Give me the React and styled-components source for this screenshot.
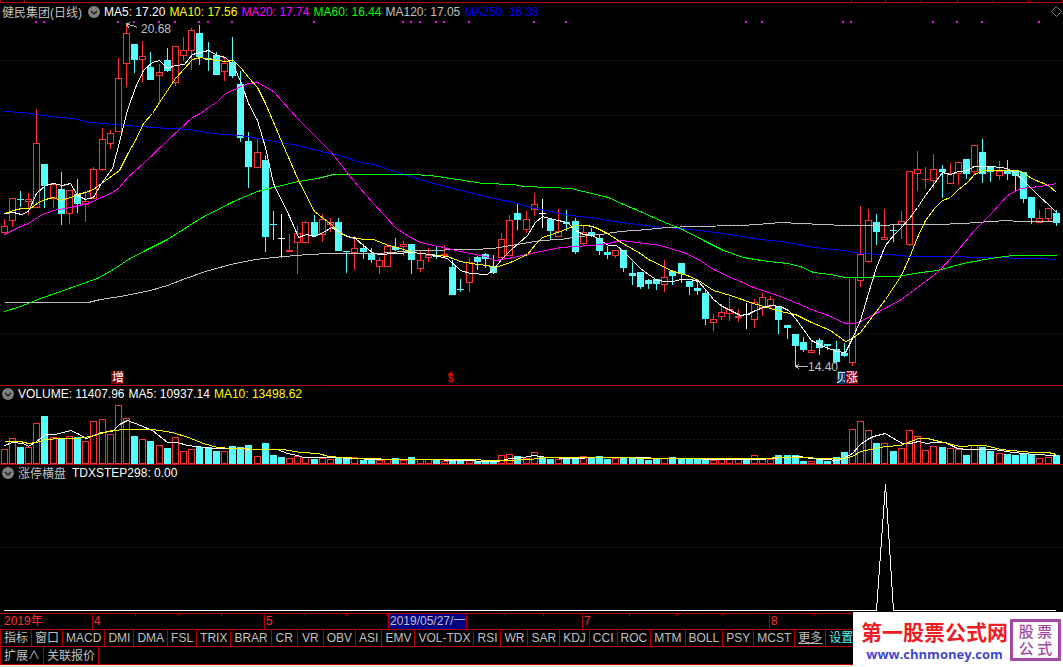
import React from "react";
import styled, { createGlobalStyle } from "styled-components";

const RED = "#ff3232";
const CYAN = "#54fcfc";
const LINE = "#b00000";

// kind, high, body top, body bottom, low, top of the volume bar
const candles = [
  ["r", 219, 226, 233, 233, 449],
  ["r", 198, 198, 221, 227, 438],
  ["c", 191, 199, 200, 207, 447],
  ["r", 193, 199, 202, 215, 447],
  ["r", 109, 143, 208, 208, 423],
  ["c", 164, 164, 186, 208, 416],
  ["r", 183, 184, 199, 208, 437],
  ["c", 172, 189, 214, 225, 438],
  ["r", 190, 190, 214, 224, 436],
  ["c", 179, 194, 204, 213, 437],
  ["r", 191, 201, 205, 222, 441],
  ["r", 167, 169, 199, 199, 421],
  ["r", 128, 139, 170, 171, 419],
  ["r", 130, 133, 144, 149, 434],
  ["r", 58, 78, 132, 132, 405],
  ["r", 25, 33, 64, 87, 418],
  ["c", 44, 44, 60, 73, 436],
  ["r", 41, 56, 60, 82, 439],
  ["c", 52, 67, 80, 80, 441],
  ["r", 64, 72, 76, 104, 445],
  ["c", 48, 60, 71, 72, 448],
  ["r", 46, 46, 83, 86, 437],
  ["r", 37, 50, 56, 61, 451],
  ["r", 28, 30, 51, 70, 449],
  ["c", 25, 33, 57, 65, 447],
  ["c", 42, 58, 60, 71, 447],
  ["c", 52, 55, 75, 75, 451],
  ["r", 58, 63, 72, 81, 451],
  ["c", 37, 62, 76, 78, 446],
  ["c", 71, 84, 138, 142, 447],
  ["c", 132, 141, 167, 188, 445],
  ["r", 139, 152, 168, 168, 456],
  ["c", 155, 160, 237, 252, 443],
  ["c", 211, 224, 225, 240, 455],
  ["w", 214, 238, 239, 258, 457],
  ["r", 234, 250, 252, 252, 458],
  ["r", 226, 233, 243, 274, 456],
  ["r", 221, 222, 243, 243, 457],
  ["c", 215, 222, 236, 236, 459],
  ["r", 214, 219, 235, 242, 458],
  ["r", 218, 222, 225, 232, 459],
  ["c", 218, 222, 251, 251, 458],
  ["c", 251, 251, 252, 273, 458],
  ["r", 236, 248, 253, 270, 457],
  ["c", 244, 248, 252, 259, 460],
  ["c", 248, 254, 260, 263, 459],
  ["r", 257, 260, 267, 274, 460],
  ["r", 245, 246, 267, 267, 459],
  ["c", 238, 247, 250, 251, 458],
  ["r", 241, 244, 247, 256, 460],
  ["c", 244, 244, 260, 274, 457],
  ["r", 251, 260, 269, 272, 459],
  ["r", 248, 255, 258, 262, 459],
  ["c", 246, 255, 257, 259, 460],
  ["r", 245, 254, 256, 256, 461],
  ["c", 260, 267, 295, 295, 460],
  ["c", 279, 289, 290, 292, 460],
  ["r", 258, 262, 283, 292, 460],
  ["c", 256, 257, 262, 270, 461],
  ["c", 253, 254, 259, 268, 460],
  ["c", 255, 266, 273, 274, 461],
  ["r", 233, 239, 258, 258, 455],
  ["r", 215, 220, 256, 256, 454],
  ["c", 203, 213, 220, 230, 456],
  ["r", 211, 219, 230, 233, 458],
  ["r", 193, 204, 210, 216, 452],
  ["w", 199, 213, 214, 228, 457],
  ["c", 219, 219, 231, 239, 459],
  ["r", 209, 231, 237, 237, 459],
  ["c", 210, 222, 224, 231, 458],
  ["c", 218, 221, 252, 254, 458],
  ["r", 225, 232, 244, 245, 456],
  ["c", 228, 232, 236, 237, 458],
  ["c", 234, 238, 251, 255, 456],
  ["c", 246, 252, 255, 259, 459],
  ["r", 250, 250, 256, 258, 458],
  ["c", 250, 250, 268, 272, 458],
  ["c", 262, 273, 276, 285, 458],
  ["c", 272, 272, 287, 289, 458],
  ["c", 279, 280, 284, 289, 460],
  ["c", 279, 279, 284, 290, 458],
  ["r", 260, 277, 285, 292, 458],
  ["c", 271, 271, 276, 285, 457],
  ["c", 263, 263, 274, 283, 459],
  ["c", 281, 281, 287, 295, 459],
  ["c", 281, 288, 291, 295, 459],
  ["c", 289, 293, 319, 325, 459],
  ["r", 314, 319, 323, 331, 460],
  ["r", 304, 312, 317, 320, 459],
  ["r", 297, 309, 314, 321, 459],
  ["r", 309, 316, 318, 322, 459],
  ["w", 303, 314, 315, 329, 460],
  ["r", 299, 302, 320, 328, 455],
  ["r", 293, 297, 308, 316, 458],
  ["r", 296, 299, 306, 308, 459],
  ["c", 306, 306, 320, 334, 455],
  ["c", 325, 325, 328, 339, 455],
  ["c", 334, 334, 346, 366, 455],
  ["c", 337, 342, 350, 352, 461],
  ["r", 341, 350, 353, 353, 461],
  ["c", 338, 340, 348, 355, 459],
  ["c", 344, 344, 346, 350, 461],
  ["c", 341, 349, 362, 364, 457],
  ["c", 343, 353, 356, 357, 452],
  ["r", 277, 277, 363, 366, 429],
  ["r", 206, 254, 281, 287, 421],
  ["r", 209, 220, 262, 263, 430],
  ["c", 214, 222, 232, 245, 443],
  ["r", 209, 237, 240, 240, 443],
  ["c", 225, 230, 231, 242, 451],
  ["r", 211, 221, 225, 239, 448],
  ["r", 171, 171, 245, 246, 430],
  ["r", 151, 169, 174, 191, 436],
  ["r", 167, 179, 180, 189, 450],
  ["r", 154, 169, 181, 189, 446],
  ["c", 165, 169, 172, 198, 447],
  ["r", 163, 173, 184, 184, 448],
  ["r", 162, 162, 174, 185, 449],
  ["c", 159, 159, 174, 179, 455],
  ["r", 145, 145, 172, 174, 445],
  ["c", 139, 152, 174, 183, 447],
  ["c", 167, 167, 172, 182, 451],
  ["r", 161, 171, 176, 180, 453],
  ["c", 160, 171, 174, 180, 454],
  ["c", 171, 171, 176, 191, 455],
  ["c", 172, 172, 199, 203, 453],
  ["c", 197, 197, 218, 224, 454],
  ["r", 210, 218, 223, 223, 458],
  ["r", 208, 208, 219, 221, 457],
  ["c", 210, 213, 223, 226, 455],
];

const priceLines = [
  {
    color: "#0000ff",
    points:
      "4,111 23,112 50,116 73,118 90,122 127,125 153,127 187,129 213,133 240,135 263,139 297,145 330,153 343,156 357,161 377,165 397,172 430,182 457,189 480,195 513,202 530,207 550,211 570,215 597,218 620,222 653,226 680,228 707,231 737,235 753,238 787,242 813,247 843,250 860,253 887,254 910,256 950,256 980,257 1037,258 1056,259",
  },
  {
    color: "#c0c0c0",
    points:
      "4,302 88,302 100,299 120,296 150,290 167,285 185,278 205,271 230,264 255,259 273,257 307,254 330,253 377,253 417,250 473,249 493,248 517,244 540,240 560,239 580,236 600,234 620,231 647,229 667,227 693,226 740,225 757,224 780,222 800,223 823,224 843,225 937,224 963,223 990,221 1007,220 1017,221 1056,221",
  },
  {
    color: "#00ff00",
    points:
      "4,311 20,306 40,298 60,291 80,284 97,278 113,269 128,259 145,250 167,239 200,218 233,201 257,191 273,187 298,181 317,178 333,174 410,174 430,175 457,179 483,183 513,184 523,186 550,187 570,188 583,191 608,197 623,204 640,211 653,217 667,223 680,228 707,242 723,250 743,257 767,261 787,263 800,266 813,272 830,274 845,277 870,277 877,276 897,276 920,272 937,270 963,263 990,258 1012,255 1056,255",
  },
  {
    color: "#ff00ff",
    points:
      "4,234 20,226 28,223 40,215 53,210 70,207 90,202 101,197 112,192 119,187 127,177 143,163 167,140 192,117 200,113 208,107 217,101 225,93 241,86 248,83 257,82 273,91 298,119 330,151 353,180 372,202 396,228 410,237 420,242 447,248 460,251 485,256 495,260 513,257 535,252 560,247 590,245 608,243 620,240 637,242 660,245 683,252 698,259 713,269 730,277 740,281 753,287 780,296 790,300 811,309 830,316 845,323 853,323 860,321 877,312 901,299 917,287 937,272 953,255 974,230 992,212 1007,195 1020,188 1040,186 1056,183",
  },
  {
    color: "#ffff00",
    points:
      "4,213 13,210 21,208 30,208 38,202 45,199 53,197 60,200 70,197 77,194 85,192 93,189 101,183 112,175 119,170 127,154 135,140 143,123 152,113 159,102 167,90 175,78 184,68 192,59 200,57 210,59 225,61 233,60 241,68 248,77 257,87 265,103 282,143 298,180 314,211 323,218 331,224 338,232 347,236 363,239 373,239 388,245 397,247 412,252 430,254 447,256 460,261 477,264 487,265 495,267 510,262 527,254 535,244 542,237 560,231 575,225 587,225 595,227 607,233 624,244 640,253 648,259 673,271 687,275 698,280 713,290 730,295 753,303 780,311 795,314 811,322 830,330 845,341 852,338 860,332 885,299 901,275 909,257 917,237 925,220 934,208 942,200 950,197 958,189 967,182 974,174 983,170 1017,170 1023,172 1031,178 1048,185 1056,192",
  },
  {
    color: "#ffffff",
    points:
      "4,213 13,212 21,214 28,211 36,193 45,185 53,183 62,185 70,183 77,195 85,199 93,197 101,183 112,168 119,142 127,110 135,87 143,70 152,62 159,60 167,68 175,65 184,64 192,54 200,52 208,50 217,55 225,57 233,65 241,83 248,103 257,120 265,147 273,183 290,218 298,237 306,234 314,236 323,232 331,227 338,231 347,236 355,238 363,245 372,252 378,254 412,252 430,254 438,256 447,258 460,270 470,273 487,274 493,269 502,258 510,250 527,235 535,222 542,216 553,219 567,222 575,230 583,234 592,235 599,239 608,245 616,245 624,252 633,261 640,268 648,274 657,280 665,281 673,281 680,279 690,279 698,281 706,290 713,299 722,306 730,310 740,315 747,314 755,310 763,307 771,305 780,306 788,310 795,318 803,329 811,340 823,346 836,351 845,352 852,338 860,320 868,293 876,267 885,245 893,235 901,227 909,218 917,207 925,195 934,183 942,172 950,174 958,171 967,170 974,166 992,166 999,167 1007,168 1015,173 1023,180 1031,188 1040,197 1048,204 1056,212",
  },
];

const volumeLines = [
  {
    color: "#ffffff",
    points:
      "4,445 12,442 23,443 28,446 36,441 45,434 55,434 70,430 77,433 86,438 101,432 112,431 119,424 127,420 140,425 152,430 167,442 177,442 187,445 213,448 277,449 287,453 297,455 303,457 335,457 350,458 377,459 433,459 453,460 497,461 510,458 523,457 533,455 547,457 570,458 600,457 640,457 660,458 680,458 720,459 760,459 783,457 800,456 810,458 825,459 837,460 843,458 852,453 860,444 867,439 873,436 885,433 893,438 902,443 910,443 918,441 927,443 933,442 945,442 957,448 967,449 993,449 1013,452 1033,454 1056,455",
  },
  {
    color: "#ffff00",
    points:
      "4,441 20,441 28,443 36,442 45,439 60,438 75,438 90,436 100,433 112,430 125,429 152,429 172,432 188,437 203,443 217,447 232,448 265,449 283,449 300,452 318,453 328,456 343,457 360,458 400,459 470,459 490,460 505,460 530,459 545,457 590,457 680,458 740,458 805,457 820,458 843,458 852,456 860,451 870,449 885,446 900,445 918,438 927,438 943,442 960,446 975,445 985,445 1000,449 1033,452 1048,452 1056,454",
  },
];

const signals = [
  36, 44, 118, 134, 159, 175, 199, 208, 232, 314, 403, 411, 420, 436, 444, 469,
  534, 566, 746, 762, 843, 851, 933, 957, 982, 1039,
];

const averages = [
  ["MA5: 17.20", "#ffffff"],
  ["MA10: 17.56", "#ffff00"],
  ["MA20: 17.74", "#ff00ff"],
  ["MA60: 16.44", "#00ff00"],
  ["MA120: 17.05", "#c0c0c0"],
  ["MA250: 16.36", "#0000ff"],
];

const months = [
  ["2019年", 92],
  ["4", 172],
  ["5", 124],
  ["", 194],
  ["7", 187],
  ["8", 294],
];

const weekTicks = [135, 178, 221, 305, 346, 386, 505, 543, 629, 676, 722, 814];

const indicators =
  "指标 窗口 MACD DMI DMA FSL TRIX BRAR CR VR OBV ASI EMV VOL-TDX RSI WR SAR KDJ CCI ROC MTM BOLL PSY MCST 更多 设置".split(
    " "
  );

const candleX = (i) => Math.floor(4.2 + i * 8.155);

const Grid = ({ levels }) =>
  levels.map((y) => (
    <line
      key={y}
      x1="1"
      x2="1063"
      y1={y + 0.5}
      y2={y + 0.5}
      stroke="#a00000"
      strokeDasharray="1 3"
    />
  ));

const Lines = ({ items }) => (
  <g transform="translate(0.5 0.5)" fill="none">
    {items.map((item) => (
      <polyline key={item.color} points={item.points} stroke={item.color} />
    ))}
  </g>
);

const Candle = ({ index, data }) => {
  const [kind, high, top, bottom, low] = data;
  const x = candleX(index);
  const color = { r: RED, c: CYAN, w: "#ffffff" }[kind];
  const hollow = kind === "r" && bottom - top > 2;
  return (
    <g fill={color}>
      <rect x={x} y={high} width="1" height={top - high} />
      <rect x={x} y={bottom} width="1" height={low - bottom} />
      {hollow ? (
        <rect
          x={x - 2.5}
          y={top + 0.5}
          width="6"
          height={bottom - top - 1}
          fill="none"
          stroke={color}
        />
      ) : (
        <rect x={x - 3} y={top} width="7" height={bottom - top} />
      )}
    </g>
  );
};

const VolumeBar = ({ index, data }) => {
  const x = candleX(index);
  const top = data[5];
  return data[0] === "r" ? (
    <rect
      x={x - 2.5}
      y={top + 0.5}
      width="6"
      height={463 - top}
      fill="none"
      stroke={RED}
    />
  ) : (
    <rect x={x - 3} y={top} width="7" height={464 - top} fill={CYAN} />
  );
};

const Toggle = ({ label }) => (
  <ToggleButton aria-label={label}>
    <svg width="12" height="12" viewBox="0 0 12 12">
      <circle cx="6" cy="6" r="6" fill="#808080" />
      <path d="M3 5l3 3 3-3" fill="none" stroke="#202020" strokeWidth="1.5" />
    </svg>
  </ToggleButton>
);

const App = () => {
  return (
    <>
      <GlobalStyle />
      <Screen>
        <TopEdge>
          <EdgeCell $size={23} />
          <EdgeCell $size={832} />
          <EdgeCell $size={34} />
          <EdgeCell $size={35} />
          <EdgeCell $size={35} />
          <EdgeCell $size={35} />
          <EdgeCell $size={35} />
          <EdgeCell $size={33} />
        </TopEdge>

        <Panel>
          <PanelHeader>
            <Name>健民集团(日线)</Name>
            <Toggle label="主图" />
            {averages.map(([text, color]) => (
              <Value key={text} $color={color}>
                {text}
              </Value>
            ))}
            <Corner width="11" height="11" viewBox="0 0 11 11">
              <path d="M5.5 0.5l5 5-5 5-5-5z" fill="none" stroke="#808080" />
            </Corner>
          </PanelHeader>
          <Chart $height={365} viewBox="0 20 1063 365">
            <Grid levels={[60, 115, 169, 224, 279, 333]} />
            {signals.map((x) => (
              <rect key={x} x={x - 1} y="21" width="2" height="2" fill="#ff00ff" />
            ))}
            {candles.map((data, i) => (
              <Candle key={i} index={i} data={data} />
            ))}
            <Lines items={priceLines} />
            <g fill="none" stroke="#c0c0c0">
              <path d="M126.5 24.5l6 1 5 2M130.5 22.5l-4 1.5 2.5 4" />
              <path d="M795.5 366.5h12M799.5 363.5l-3.5 3 3.5 3" />
            </g>
            <ChartText x="141" y="33">
              20.68
            </ChartText>
            <ChartText x="808" y="371">
              14.40
            </ChartText>
            <rect x="111" y="371" width="13" height="13" fill="#800000" />
            <ChartText x="112" y="382" $color="#ffffff">
              增
            </ChartText>
            <rect x="837" y="371" width="9" height="13" fill="#003468" />
            <ChartText x="836" y="382" $color="#ffffff">
              贝
            </ChartText>
            <path d="M845 371h10l3 3v10h-13z" fill="#800000" />
            <ChartText x="846" y="382" $color="#ffffff">
              涨
            </ChartText>
            <path d="M448 375l2.500-3 2.500 3z" fill="#ff0000" />
            <ChartText x="448" y="382" $color="#ff0000" $small>
              $
            </ChartText>
          </Chart>
        </Panel>

        <Panel>
          <PanelHeader $raised>
            <Toggle label="成交量" />
            <Value $color="#ffffff">VOLUME: 11407.96</Value>
            <Value $color="#ffffff">MA5: 10937.14</Value>
            <Value $color="#ffff00">MA10: 13498.62</Value>
          </PanelHeader>
          <Chart $height={61} viewBox="0 403 1063 61">
            <Grid levels={[416, 439]} />
            {candles.map((data, i) => (
              <VolumeBar key={i} index={i} data={data} />
            ))}
            <Lines items={volumeLines} />
          </Chart>
        </Panel>

        <Panel>
          <PanelHeader $raised>
            <Toggle label="副图" />
            <Name>涨停横盘</Name>
            <Value $color="#ffffff">TDXSTEP298: 0.00</Value>
          </PanelHeader>
          <Chart $height={131} viewBox="0 482 1063 131">
            <Grid levels={[547]} />
            <path
              d="M4 610.500H876.500L885.500 484L893.500 610.500H1056"
              fill="none"
              stroke="#ffffff"
            />
          </Chart>
        </Panel>

        <Axis>
          <Ticks viewBox="0 0 1063 15">
            {weekTicks.map((x) => (
              <rect key={x} x={x} y="0" width="1" height="2" fill={LINE} />
            ))}
          </Ticks>
          {months.map(([text, size]) => (
            <Month key={size} $size={size}>
              {text}
            </Month>
          ))}
          <Cursor>2019/05/27/一</Cursor>
        </Axis>

        <Bar>
          {indicators.map((text) => (
            <Tab key={text} $active={text === "设置"} $underline={text === "更多"}>
              {text}
            </Tab>
          ))}
        </Bar>
        <Bar>
          <Tab>扩展∧</Tab>
          <Tab>关联报价</Tab>
        </Bar>
        <BottomEdge />

        <Watermark>
          <SiteText>
            <SiteName>第一股票公式网</SiteName>
            <SiteLink href="#">www.chnmoney.com</SiteLink>
          </SiteText>
          <Stamp>股 票 公 式</Stamp>
        </Watermark>
      </Screen>
    </>
  );
};

const GlobalStyle = createGlobalStyle`
  * {
    box-sizing: border-box;
  }
  body {
    margin: 0;
    background: #000;
    overflow: hidden;
  }
`;

const Screen = styled.div`
  position: relative;
  display: flex;
  flex-direction: column;
  background: #000;
  color: #c0c0c0;
  font: 12px "Liberation Sans", "Noto Sans CJK SC", sans-serif;
  white-space: nowrap;
`;

const TopEdge = styled.div`
  display: flex;
  height: 2px;
  border-left: 1px solid ${LINE};
`;

const EdgeCell = styled.div`
  flex: ${(props) => props.$size} 0 0;
  border-right: 1px solid ${LINE};
`;

const Panel = styled.section`
  border-top: 1px solid ${LINE};
`;

const PanelHeader = styled.header`
  display: flex;
  align-items: center;
  gap: 4px;
  height: 17px;
  padding: 0 1px ${(props) => (props.$raised ? 2 : 0)}px 2px;
`;

const Name = styled.span`
  padding-right: 2px;
  color: #c0c0c0;
`;

const Value = styled.span`
  color: ${(props) => props.$color};
`;

const ToggleButton = styled.button`
  display: flex;
  padding: 0;
  border: 0;
  background: none;
`;

const Corner = styled.svg`
  margin-left: auto;
`;

const Chart = styled.svg.attrs({ preserveAspectRatio: "none" })`
  display: block;
  width: 100%;
  height: ${(props) => props.$height}px;
  shape-rendering: crispEdges;
`;

const ChartText = styled.text`
  fill: ${(props) => props.$color || "#c0c0c0"};
  font-size: ${(props) => (props.$small ? 10 : 12)}px;
  font-weight: ${(props) => (props.$small ? "bold" : "normal")};
`;

const Axis = styled.div`
  position: relative;
  display: flex;
  height: 16px;
  border-top: 1px solid ${LINE};
`;

const Ticks = styled.svg.attrs({ preserveAspectRatio: "none" })`
  position: absolute;
  width: 100%;
  height: 15px;
`;

const Month = styled.div`
  flex: none;
  width: calc(100% * ${(props) => props.$size} / 1063);
  padding-left: 1px;
  line-height: 15px;
  color: ${RED};

  & + & {
    border-left: 1px solid ${LINE};
  }

  &:first-of-type {
    padding-left: 4px;
  }

  &:nth-of-type(4) {
    border-left: 0;
  }
`;

const Cursor = styled.div`
  position: absolute;
  left: 36.5%;
  width: 79px;
  height: 15px;
  padding-left: 1px;
  overflow: hidden;
  border: solid ${LINE};
  border-width: 0 1px;
  background: #000080;
  line-height: 15px;
`;

const Bar = styled.nav`
  display: flex;
  height: 17px;
  border: solid ${LINE};
  border-width: 1px 0 0 1px;

  & + & {
    height: 18px;
  }
`;

const Tab = styled.button`
  flex: none;
  min-width: 26px;
  padding: 0 3px;
  border: 0;
  border-right: 1px solid ${LINE};
  background: none;
  color: ${(props) => (props.$active ? CYAN : "#c0c0c0")};
  font: inherit;
  line-height: 16px;
  text-decoration: ${(props) => (props.$underline ? "underline" : "none")};
`;

const BottomEdge = styled.div`
  height: 3px;
  border-top: 1px solid ${LINE};
  background: #ece4e0;
`;

const Watermark = styled.aside`
  position: absolute;
  right: 0;
  bottom: 0;
  display: flex;
  align-items: center;
  gap: 2px;
  width: 210px;
  height: 55px;
  padding-left: 8px;
  background: #fff;
`;

const SiteText = styled.div`
  display: flex;
  flex-direction: column;
  align-items: center;
`;

const SiteName = styled.strong`
  color: #ee1c25;
  font: bold 21px/29px "Noto Sans CJK SC", sans-serif;
`;

const SiteLink = styled.a`
  color: #3f48cc;
  font: bold 13px/16px "Open Sans", sans-serif;
  text-decoration: none;
`;

const Stamp = styled.div`
  width: 51px;
  height: 42px;
  padding: 0 4px;
  border: 3px solid #a349a4;
  color: #a349a4;
  font: 500 15px/17px "Noto Sans CJK SC", sans-serif;
  text-align: center;
  white-space: normal;
`;

export default App;
